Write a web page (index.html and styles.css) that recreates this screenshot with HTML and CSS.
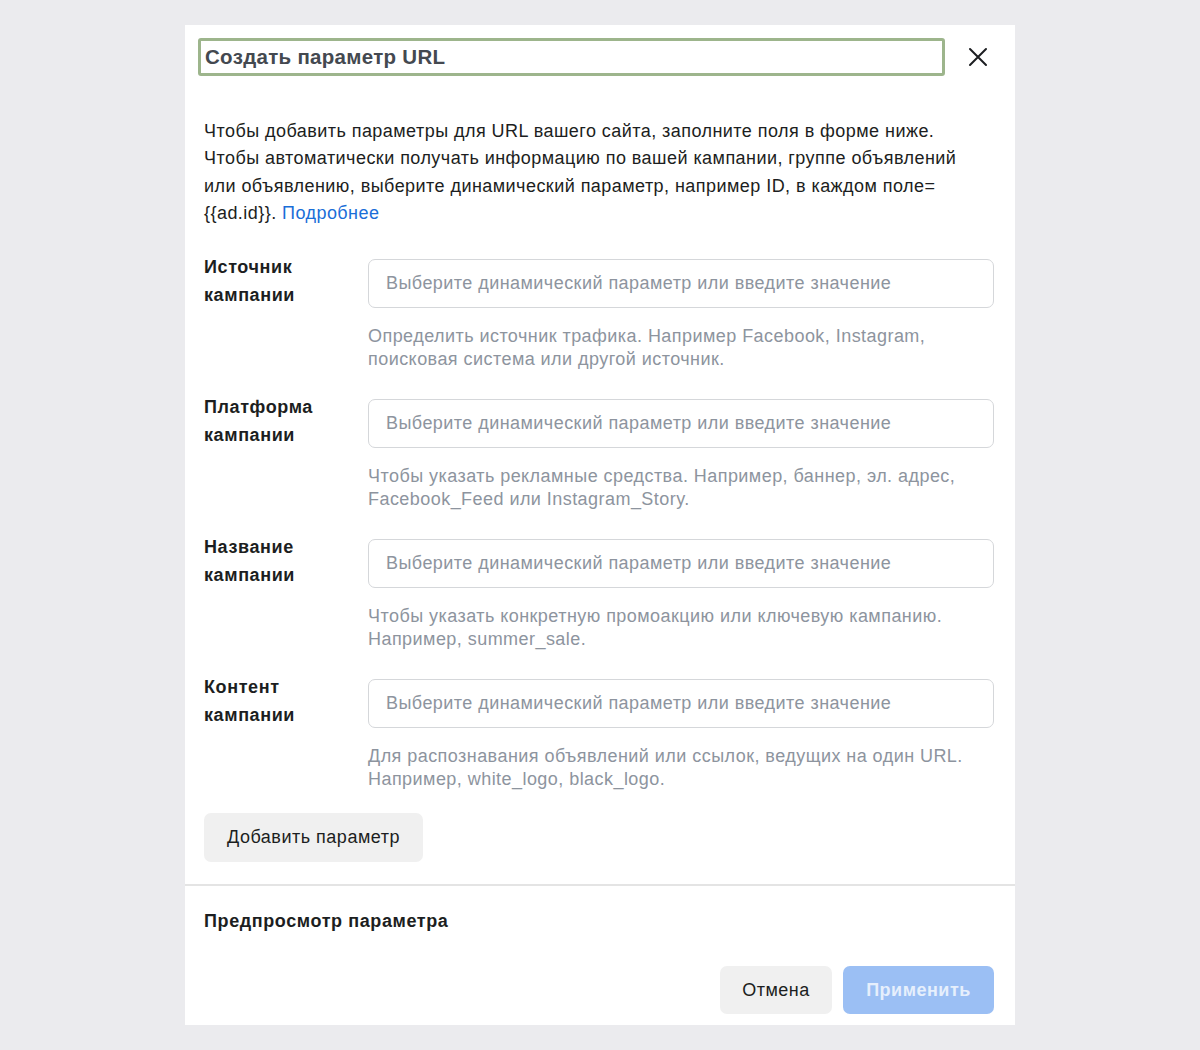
FILE: index.html
```html
<!DOCTYPE html>
<html lang="ru">
<head>
    <meta charset="UTF-8">
    <meta name="viewport" content="width=device-width, initial-scale=1.0">
    <title>Создать параметр URL</title>
    <link rel="stylesheet" href="styles.css">
</head>
<body>

    <div class="dialog">
        <!-- header -->
        <div class="dialog-header">
            <h2 class="dialog-title">Создать параметр URL</h2>
            <button class="close-btn" aria-label="Закрыть">
                <svg width="20" height="20" viewBox="0 0 20 20">
                    <path d="M2 2 L18 18 M18 2 L2 18" stroke="#1c1e21" stroke-width="2" stroke-linecap="round"/>
                </svg>
            </button>
        </div>

        <div class="dialog-body">
            <p class="intro">
                Чтобы добавить параметры для URL вашего сайта, заполните поля в форме ниже.<br>
                Чтобы автоматически получать информацию по вашей кампании, группе объявлений или объявлению, выберите динамический параметр, например ID, в каждом поле= {{ad.id}}. <a href="#" class="link">Подробнее</a>
            </p>

            <div class="param-row">
                <label class="param-label">Источник кампании</label>
                <div class="param-field">
                    <input class="param-input" type="text" placeholder="Выберите динамический параметр или введите значение">
                    <p class="param-help">Определить источник трафика. Например Facebook, Instagram, поисковая система или другой источник.</p>
                </div>
            </div>

            <div class="param-row">
                <label class="param-label">Платформа кампании</label>
                <div class="param-field">
                    <input class="param-input" type="text" placeholder="Выберите динамический параметр или введите значение">
                    <p class="param-help">Чтобы указать рекламные средства. Например, баннер, эл. адрес, Facebook_Feed или Instagram_Story.</p>
                </div>
            </div>

            <div class="param-row">
                <label class="param-label">Название кампании</label>
                <div class="param-field">
                    <input class="param-input" type="text" placeholder="Выберите динамический параметр или введите значение">
                    <p class="param-help">Чтобы указать конкретную промоакцию или ключевую кампанию. Например, summer_sale.</p>
                </div>
            </div>

            <div class="param-row">
                <label class="param-label">Контент кампании</label>
                <div class="param-field">
                    <input class="param-input" type="text" placeholder="Выберите динамический параметр или введите значение">
                    <p class="param-help">Для распознавания объявлений или ссылок, ведущих на один URL. Например, white_logo, black_logo.</p>
                </div>
            </div>

            <button class="btn btn-grey add-btn">Добавить параметр</button>
        </div>

        <div class="dialog-footer">
            <div class="preview-title">Предпросмотр параметра</div>
            <div class="actions">
                <button class="btn btn-grey">Отмена</button>
                <button class="btn btn-primary" disabled>Применить</button>
            </div>
        </div>
    </div>

</body>
</html>
```

FILE: styles.css
```css
body {
    margin: 0;
    background-color: #ebebee;
    font-family: 'Liberation Sans', Arial, sans-serif;
    color: #1c1e21;
    padding: 25px 0;
}

.dialog {
    width: 830px;
    margin: 0 auto;
    background: #fff;
    box-sizing: border-box;
}

/* header */
.dialog-header {
    display: flex;
    align-items: center;
    padding: 13px 0 0 13px;
}

.dialog-title {
    width: 747px;
    box-sizing: border-box;
    height: 38px;
    margin: 0;
    padding: 0 4px;
    border: 3px solid #9db58c;
    border-radius: 3px;
    font-size: 20.5px;
    font-weight: bold;
    letter-spacing: 0.3px;
    line-height: 32px;
    color: #444950;
}

.close-btn {
    border: none;
    background: none;
    padding: 0;
    margin-left: 23px;
    width: 20px;
    height: 20px;
    display: flex;
    cursor: pointer;
}

.dialog-body {
    padding: 0 21px 0 19px;
}

.intro {
    max-width: 780px;
    margin: 42px 0 26px;
    font-size: 18px;
    letter-spacing: 0.45px;
    line-height: 27.3px;
}

.link {
    color: #1a6ed8;
    text-decoration: none;
}

/* parameter rows */
.param-row {
    display: grid;
    grid-template-columns: 144px 1fr;
    column-gap: 20px;
    margin-bottom: 22px;
}

.param-label {
    font-size: 18px;
    font-weight: bold;
    letter-spacing: 0.6px;
    line-height: 28px;
}

.param-input {
    display: block;
    width: 100%;
    box-sizing: border-box;
    height: 49px;
    margin-top: 6px;
    padding: 0 17px;
    border: 1px solid #d5d7da;
    border-radius: 7px;
    font-family: inherit;
    font-size: 18px;
    letter-spacing: 0.45px;
    color: #1c1e21;
    outline: none;
}

.param-input::placeholder {
    color: #8d949e;
}

.param-help {
    margin: 17px 0 0;
    font-size: 18px;
    letter-spacing: 0.45px;
    line-height: 23px;
    color: #8d949e;
}

/* buttons */
.btn {
    height: 49px;
    border: none;
    border-radius: 7px;
    padding: 0;
    font-family: inherit;
    font-size: 18px;
    letter-spacing: 0.5px;
    cursor: pointer;
}

.btn-grey {
    background: #f0f0f0;
    color: #1c1e21;
}

.btn-primary {
    background: #9bbff4;
    color: #e6effc;
    font-weight: bold;
}

.add-btn {
    width: 219px;
    margin-bottom: 22px;
}

.dialog-footer {
    border-top: 2px solid #e4e4e4;
    padding: 21px 21px 11px 19px;
}

.preview-title {
    font-size: 18px;
    font-weight: bold;
    letter-spacing: 0.6px;
    line-height: 28px;
}

.actions {
    display: flex;
    justify-content: flex-end;
    gap: 11px;
    margin-top: 31px;
}

.actions .btn {
    height: 48px;
}

.actions .btn-grey {
    width: 112px;
}

.actions .btn-primary {
    width: 151px;
}
```
